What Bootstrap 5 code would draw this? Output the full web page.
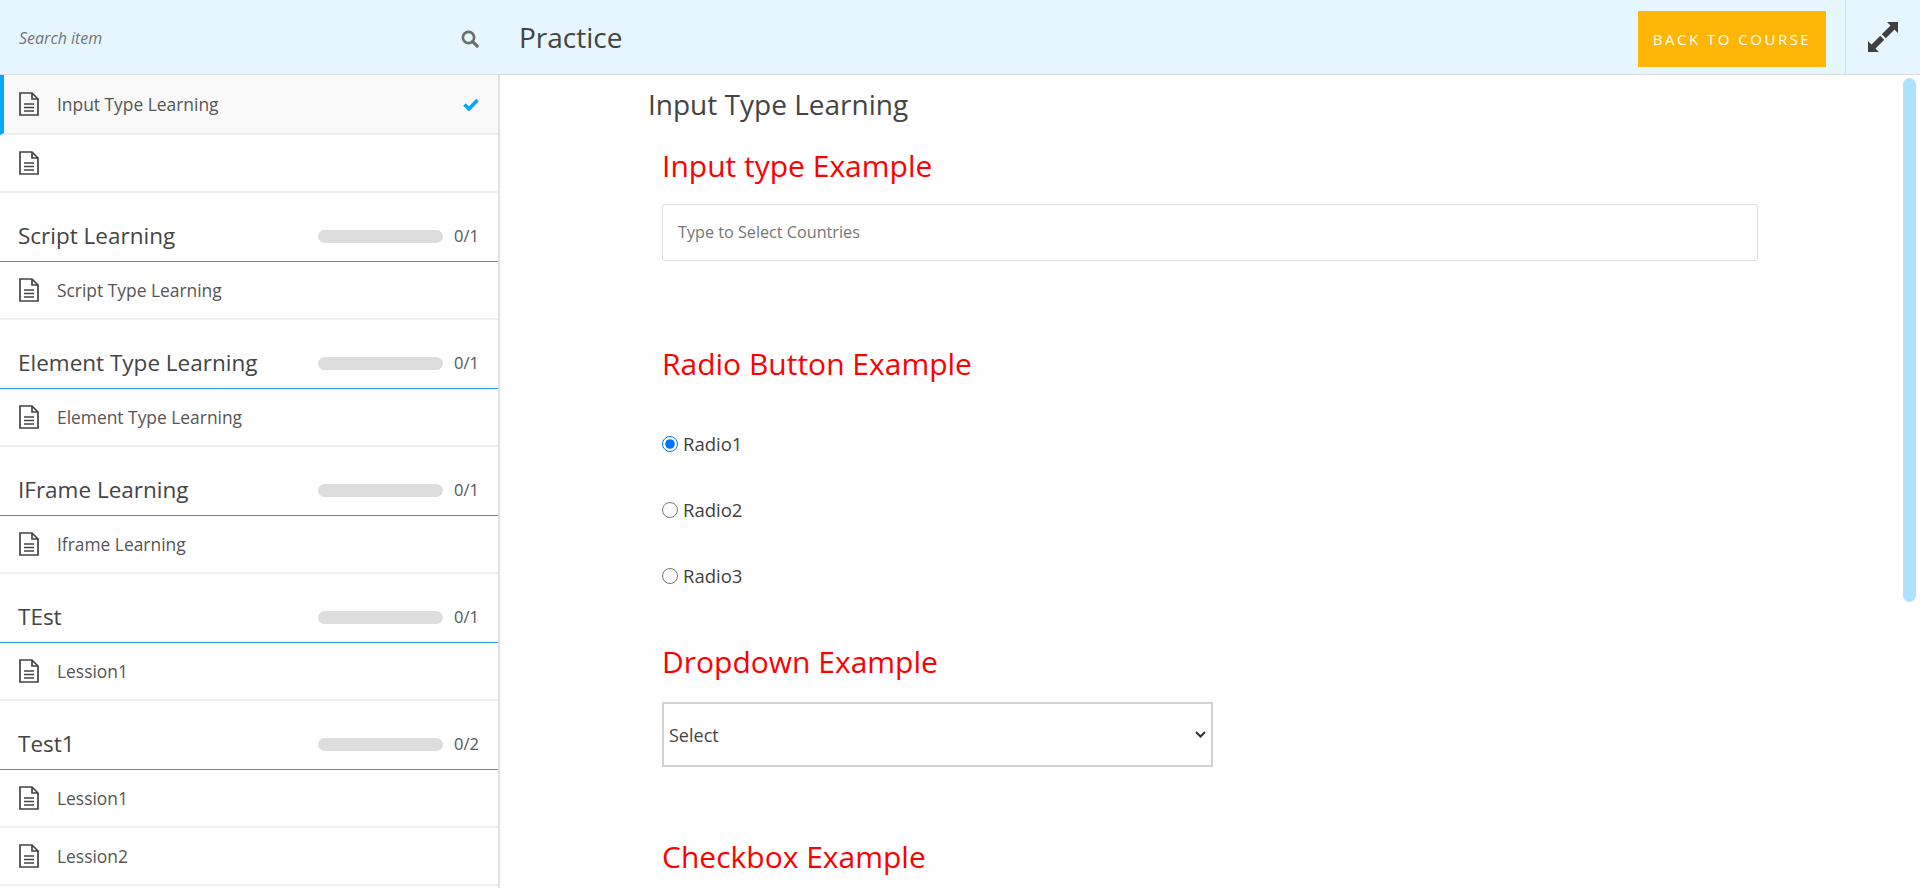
<!DOCTYPE html>
<html lang="en">
<head>
    <meta charset="UTF-8">
    <title>Practice</title>
    <link href="https://cdn.jsdelivr.net/npm/bootstrap@5.3.3/dist/css/bootstrap.min.css" rel="stylesheet">
    <style>
        html, body {
            height: 888px;
            overflow: hidden;
        }
        body {
            font-family: "Open Sans", "Noto Sans", sans-serif;
            color: #3f3f3f;
            background: #fff;
        }
        .top-bar {
            height: 75px;
            background: #e5f6ff;
            border-bottom: 1px solid #dcdcdc;
        }
        .search-box {
            width: 500px;
            padding: 0 21px 0 19px;
        }
        .search-input {
            border: 0;
            outline: 0;
            background: transparent;
            font-size: 16px;
            font-style: italic;
            width: 300px;
            padding: 2px 0 0;
        }
        .search-input::placeholder {
            color: #757575;
        }
        .search-icon {
            margin-top: 3px;
        }
        .page-name {
            font-size: 28px;
            padding-left: 19px;
            color: #444;
        }
        .back-btn {
            width: 188px;
            height: 56px;
            background: #ffb606;
            color: #fff;
            font-size: 15px;
            letter-spacing: 2.5px;
            border-radius: 0;
            border: 0;
            margin: 4px 19px 0 0;
            padding: 0;
        }
        .expand-box {
            width: 75px;
            height: 74px;
            border-left: 1px solid #dcdcdc;
        }
        .body-row {
            height: 813px;
        }
        .side-col {
            width: 500px;
            border-right: 2px solid #e0e0e0;
            flex-shrink: 0;
            overflow: hidden;
        }
        .lesson-row {
            height: 58px;
            padding: 0 19px;
            border-bottom: 2px solid #eeeeee;
            gap: 18px;
            font-size: 17.4px;
            color: #555;
        }
        .lesson-row.current {
            height: 60px;
            background: #f9f9f9;
            border-left: 4px solid #00a8ff;
            padding-left: 15px;
        }
        .section-head {
            height: 69px;
            padding: 17px 18px 0 18px;
            border-bottom: 1px solid #1ea4e6;
        }
        .section-title {
            font-size: 22.5px;
            line-height: 32px;
            color: #444;
        }
        .count-bar {
            width: 125px;
            height: 13px;
            border-radius: 7px;
            background: #dddddd;
            margin: 2px 11px 0 0;
        }
        .count-text {
            font-size: 16.5px;
            width: 26px;
            margin-top: 2px;
            color: #555;
        }
        .main-col {
            min-width: 0;
            padding-left: 148px;
            overflow: hidden;
        }
        .lesson-heading {
            font-size: 28px;
            line-height: 38px;
            margin: 10px 0 0;
            color: #444;
            font-weight: 400;
        }
        .form-area {
            width: 1096px;
            margin-left: 14px;
        }
        .red-heading {
            color: #f00;
            font-size: 30px;
            line-height: 40px;
            font-weight: 400;
            margin: 0;
        }
        .gap-first { margin-top: 23px; }
        .gap-box { margin-top: 18px; }
        .gap-wide { margin-top: 83px; }
        .gap-radio { margin-top: 27px; }
        .gap-drop { margin-top: 33px; }
        .gap-select { margin-top: 20px; }
        .gap-check { margin-top: 70px; }
        .text-box {
            height: 57px;
            border: 1px solid #ddd;
            border-radius: 3px;
            padding: 0 15px 2px;
            font-size: 16.2px;
        }
        .text-box::placeholder {
            color: #757575;
        }
        .radio-row {
            height: 66px;
            font-size: 18.5px;
            gap: 5px;
        }
        .radio-row input {
            width: 16px;
            height: 16px;
            margin: 0;
        }
        .select-box {
            width: 551px;
            height: 65px;
            border: 2px solid #d2d2d2;
            padding: 1px 5px 0;
            font-size: 18px;
            color: #444;
            appearance: none;
            background: #fff url("data:image/svg+xml,%3Csvg xmlns='http://www.w3.org/2000/svg' width='11' height='7'%3E%3Cpath d='M1 1l4.500 4.500L10 1' fill='none' stroke='%23333' stroke-width='2'/%3E%3C/svg%3E") no-repeat right 5px center;
        }
        .thumb {
            position: absolute;
            top: 3px;
            right: 4px;
            width: 13px;
            height: 524px;
            border-radius: 7px;
            background: #aee2ff;
        }
    </style>
</head>
<body>
<div class="top-bar d-flex align-items-center">
    <div class="search-box d-flex align-items-center justify-content-between">
        <input class="search-input" type="text" placeholder="Search item">
        <svg class="search-icon" width="18" height="18" viewBox="0 0 18 18"><circle cx="7.5" cy="7.5" r="5.6" fill="none" stroke="#6e6e6e" stroke-width="2.6"/><path d="M11.6 11.6l4.6 4.6" stroke="#6e6e6e" stroke-width="3.2" stroke-linecap="round"/></svg>
    </div>
    <div class="page-name flex-grow-1">Practice</div>
    <button class="btn back-btn">BACK TO COURSE</button>
    <div class="expand-box d-flex align-items-center justify-content-center">
        <svg width="32" height="32" viewBox="0 0 32 32"><path fill="#3f3f3f" d="M20 1H31V12L27.5 8.5 18.750 17.250 14.750 13.250 23.500 4.500Z"/><path fill="#3f3f3f" d="M12 31H1V20L4.500 23.500 13.250 14.750 17.250 18.750 8.500 27.500Z"/></svg>
    </div>
</div>

<div class="body-row d-flex position-relative">
    <div class="side-col" id="sidebar"></div>
    <div class="main-col flex-grow-1">
        <h4 class="lesson-heading">Input Type Learning</h4>
        <div class="form-area">
            <h3 class="red-heading gap-first">Input type Example</h3>
            <input class="form-control text-box gap-box" type="text" placeholder="Type to Select Countries">
            <h3 class="red-heading gap-wide">Radio Button Example</h3>
            <div class="radio-row d-flex align-items-center gap-radio"><input type="radio" name="r" checked><label>Radio1</label></div>
            <div class="radio-row d-flex align-items-center"><input type="radio" name="r"><label>Radio2</label></div>
            <div class="radio-row d-flex align-items-center"><input type="radio" name="r"><label>Radio3</label></div>
            <h3 class="red-heading gap-drop">Dropdown Example</h3>
            <select class="select-box d-block gap-select"><option>Select</option></select>
            <h3 class="red-heading gap-check">Checkbox Example</h3>
        </div>
    </div>
    <div class="thumb"></div>
</div>

<script>
    const fileIcon = `<svg width="20" height="24" viewBox="0 0 20 24"><path d="M1 1h12l6 6v16H1zM13 1v6h6" fill="none" stroke="#444" stroke-width="1.7"/><path d="M5 12h10M5 15.5h10M5 19h10" stroke="#444" stroke-width="1.6"/></svg>`;
    const sections = [
        ['', ['Input Type Learning', '']],
        ['Script Learning', ['Script Type Learning'], '0/1'],
        ['Element Type Learning', ['Element Type Learning'], '0/1'],
        ['IFrame Learning', ['Iframe Learning'], '0/1'],
        ['TEst', ['Lession1'], '0/1'],
        ['Test1', ['Lession1', 'Lession2'], '0/2']
    ];
    let html = '';
    sections.forEach((s, i) => {
        if (s[0]) {
            html += `<div class="section-head d-flex align-items-center">
                <span class="section-title flex-grow-1">${s[0]}</span>
                <span class="count-bar"></span><span class="count-text">${s[2]}</span></div>`;
        }
        s[1].forEach((name, j) => {
            const cur = i === 0 && j === 0;
            html += `<div class="lesson-row d-flex align-items-center ${cur ? 'current' : ''}">${fileIcon}<span class="flex-grow-1">${name}</span>
                ${cur ? '<svg width="16" height="13" viewBox="0 0 16 13"><path d="M1.500 6.500l4.500 4.500 8.500-9" fill="none" stroke="#00a8ff" stroke-width="3.600"/></svg>' : ''}</div>`;
        });
    });
    document.getElementById('sidebar').innerHTML = html;
</script>
<script src="https://cdn.jsdelivr.net/npm/bootstrap@5.3.3/dist/js/bootstrap.bundle.min.js"></script>
</body>
</html>
